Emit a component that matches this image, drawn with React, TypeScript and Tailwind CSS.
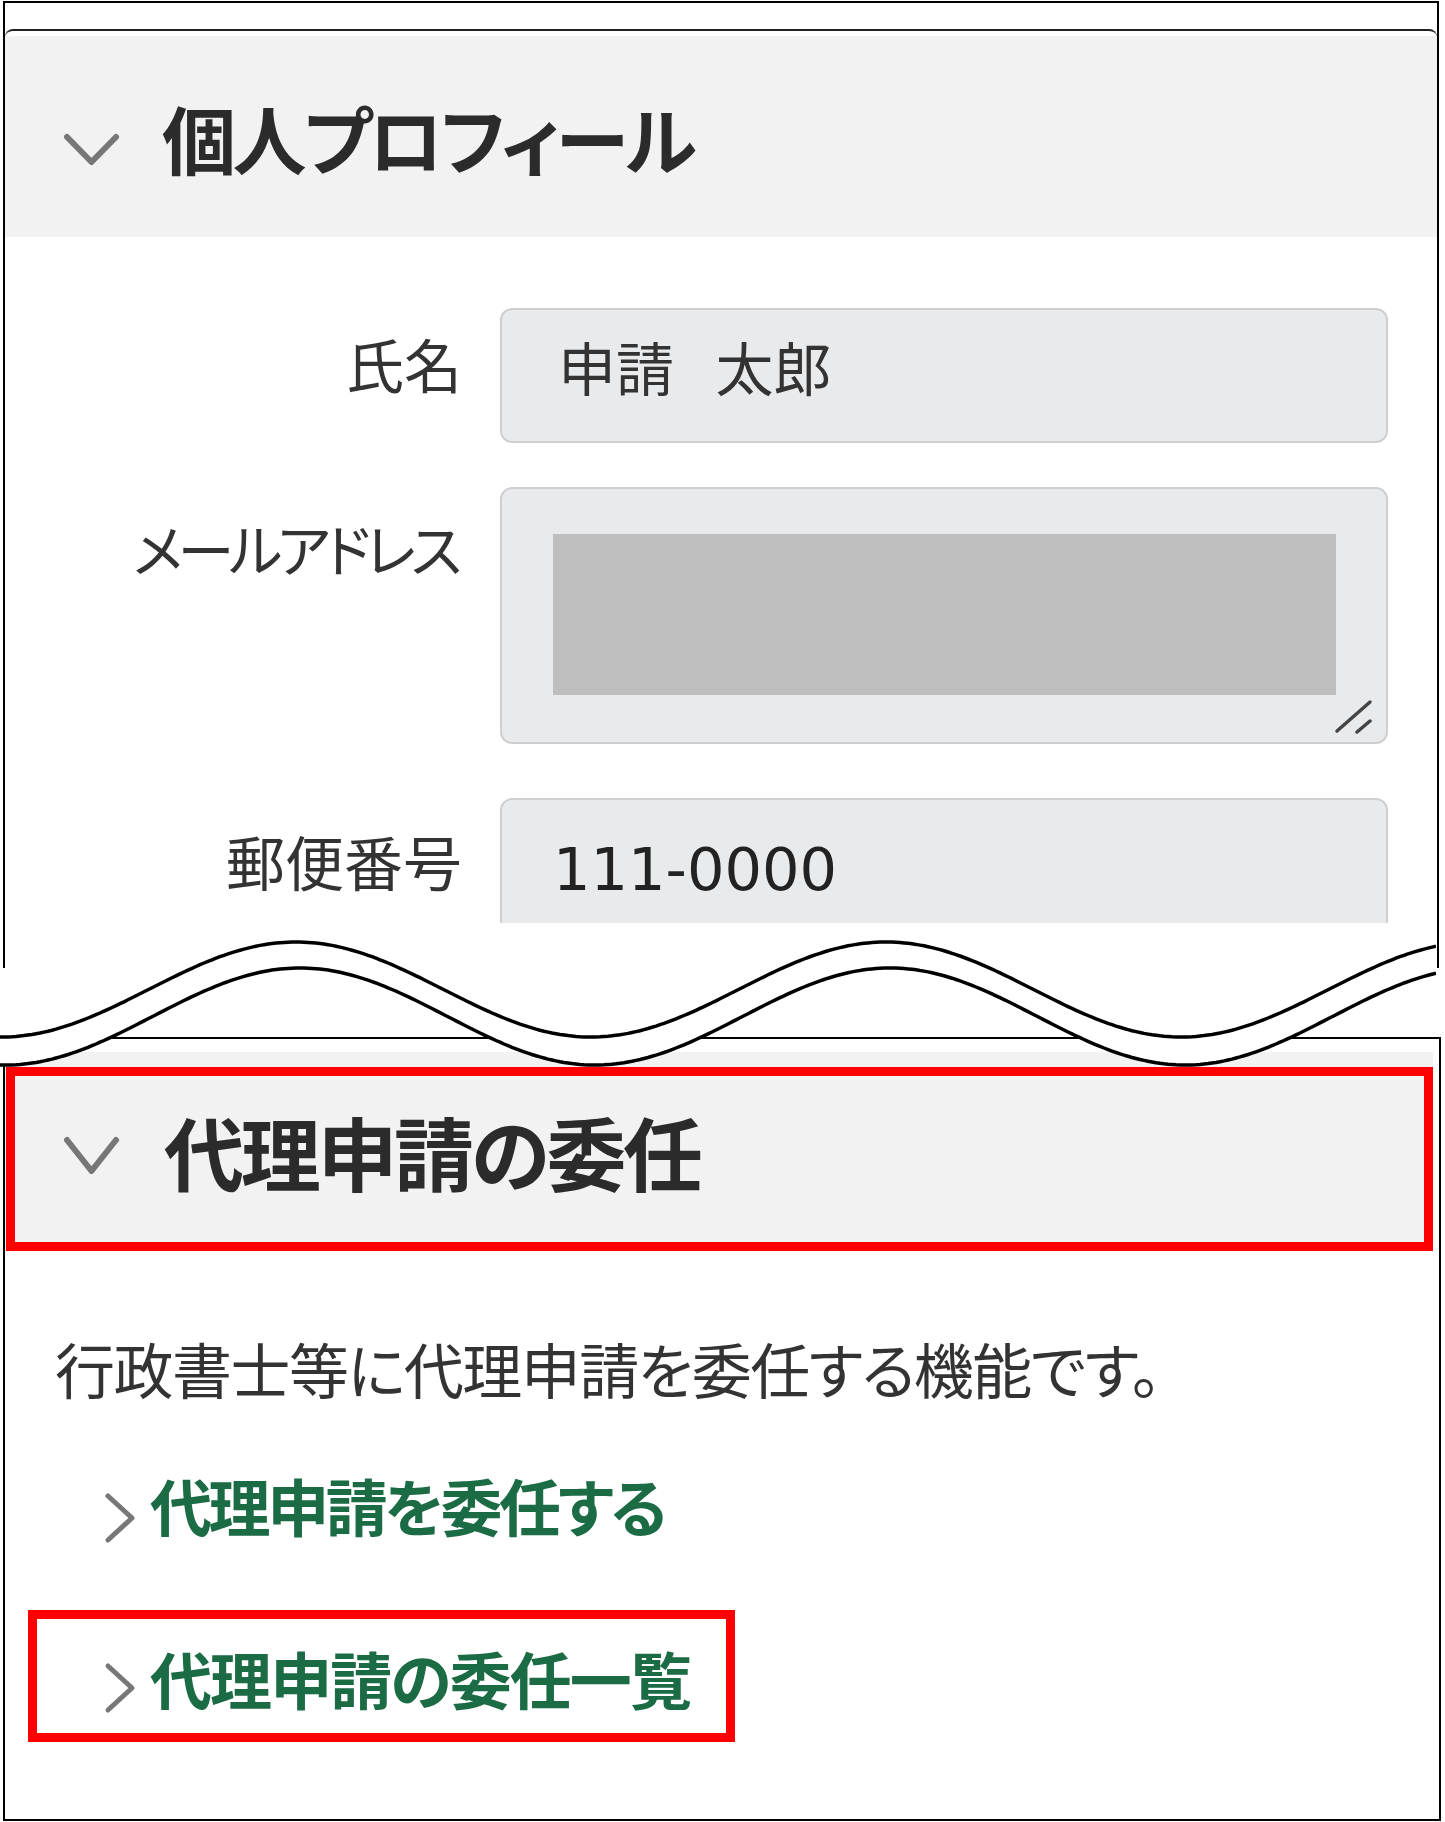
import React from 'react';

const period = 590;

function wavePoints(y0: number, amp: number, phase: number, w: number) {
  const pts: string[] = [];
  for (let x = 0; x <= w; x += 4) {
    const y = y0 - amp * Math.cos((2 * Math.PI * (x - phase)) / period);
    pts.push(`${x},${y.toFixed(1)}`);
  }
  return pts;
}

function WaveBreak() {
  const w = 1436;
  const upper = wavePoints(61.5, 47.5, 296, w);
  const lower = wavePoints(88.5, 48.5, 300, w);
  const fill = [...upper, ...[...lower].reverse()].join(' ');
  return (
    <svg className="absolute left-0 -top-[40px] z-10" width={w} height={150} viewBox={`0 0 ${w} 150`}>
      <polygon points={fill} fill="#fff" />
      <polyline points={upper.join(' ')} fill="none" stroke="#000" strokeWidth={3.5} />
      <polyline points={lower.join(' ')} fill="none" stroke="#000" strokeWidth={3.5} />
    </svg>
  );
}

function ChevronDown({ h = 33 }: { h?: number }) {
  return (
    <svg width={57} height={h} viewBox={`0 0 57 ${h}`} className="shrink-0">
      <polyline points={`4,4 28.5,${h - 4} 53,4`} fill="none" stroke="#777" strokeWidth={6} strokeLinecap="round" strokeLinejoin="round" />
    </svg>
  );
}

function ChevronRight() {
  return (
    <svg width={34} height={52} viewBox="0 0 34 52" className="shrink-0">
      <polyline points="5,4 29,26 5,48" fill="none" stroke="#777" strokeWidth={5} strokeLinecap="round" strokeLinejoin="round" />
    </svg>
  );
}

const jp = "font-['Noto_Sans_CJK_JP',sans-serif] [font-feature-settings:'palt']";

export default function App() {
  return (
    <div className="relative w-[1445px] h-[1822px] bg-white overflow-hidden text-[#333] font-['Noto_Sans_CJK_JP',sans-serif]">
      {/* top crop */}
      <div className="ml-[3px] mt-[1px] w-[1436px] h-[967px] border-x-2 border-t-2 border-black overflow-hidden">
        <div className="mt-[26px] border-t-2 border-[#222] rounded-t-[8px] pt-[5px]">
          <div className="h-[201px] bg-[#f2f2f2] flex items-center pl-[58px]">
            <div className="pt-[26px]">
              <ChevronDown />
            </div>
            <h2 className={`ml-[42px] text-[74px] leading-none font-bold tracking-[-3.4px] text-[#2b2b2b] ${jp}`}>個人プロフィール</h2>
          </div>

          <div className="pt-[71px] flex flex-col">
            <div className="flex items-start">
              <label className={`w-[457px] text-right text-[58px] leading-none pt-[26px] ${jp}`}>氏名</label>
              <div className="ml-[38px] w-[888px] h-[135px] rounded-[12px] border-2 border-[#cfcfcf] bg-[#e9eaec] pl-[56px] pt-[32px] text-[58px] leading-none text-[#333] [word-spacing:23px] font-['DejaVu_Sans','Noto_Sans_CJK_JP',sans-serif]">
                申請 太郎
              </div>
            </div>

            <div className="flex items-start mt-[44px]">
              <label className={`w-[457px] text-right text-[57px] leading-none tracking-[-5px] pr-[5px] pt-[32px] ${jp}`}>メールアドレス</label>
              <div className="relative ml-[38px] w-[888px] h-[257px] rounded-[12px] border-2 border-[#cfcfcf] bg-[#e9eaec] pl-[51px] pt-[45px]">
                <div className="w-[783px] h-[161px] bg-[#bebebe]" />
                <svg className="absolute right-[12px] bottom-[8px]" width={40} height={36} viewBox="0 0 40 36">
                  <line x1={3} y1={33} x2={36} y2={4} stroke="#444" strokeWidth={3.5} strokeLinecap="round" />
                  <line x1={23} y1={34} x2={36} y2={23} stroke="#444" strokeWidth={3.5} strokeLinecap="round" />
                </svg>
              </div>
            </div>

            <div className="flex items-start mt-[54px]">
              <label className={`w-[457px] text-right text-[59px] leading-none pt-[33px] ${jp}`}>郵便番号</label>
              <div className="ml-[38px] w-[888px] h-[125px] overflow-hidden">
                <div className="h-[135px] rounded-[12px] border-2 border-[#cfcfcf] bg-[#e9eaec] pl-[51px] pt-[40px] text-[59px] leading-none text-[#222] font-['DejaVu_Sans',sans-serif]">
                  111-0000
                </div>
              </div>
            </div>
          </div>
        </div>
      </div>

      {/* break */}
      <div className="relative h-[69px]">
        <WaveBreak />
      </div>

      {/* bottom crop */}
      <div className="ml-[3px] w-[1438px] h-[784px] border-2 border-black pt-[13px]">
        <div className="relative mr-[6px] h-[196px] bg-[#f2f2f2] flex items-center pl-[58px]">
          <div className="pt-[10px]">
            <ChevronDown h={39} />
          </div>
          <h2 className={`ml-[44px] text-[80px] leading-none font-bold tracking-[-3.3px] text-[#2b2b2b] ${jp}`}>代理申請の委任</h2>
          <div className="absolute left-[1px] right-0 top-[15px] -bottom-[3px] border-[9px] border-[#ff0000]" />
        </div>

        <p className={`mt-[90px] pl-[50px] text-[60px] leading-none tracking-[-1.5px] text-[#333] ${jp}`}>
          行政書士等に代理申請を委任する機能です。
        </p>

        <div className="mt-[76px] pl-[98px] flex items-start">
          <div className="mt-[18px]">
            <ChevronRight />
          </div>
          <a className={`ml-[13px] text-[62px] leading-none font-bold tracking-[-3.4px] text-[#1b6b45] ${jp}`}>代理申請を委任する</a>
        </div>

        <div className="mt-[66px] ml-[23px] w-[707px] h-[132px] border-[9px] border-[#ff0000] pt-[28px] pl-[66px] flex items-start">
          <div className="mt-[15px]">
            <ChevronRight />
          </div>
          <a className={`ml-[13px] text-[62px] leading-none font-bold tracking-[-1.9px] text-[#1b6b45] whitespace-nowrap ${jp}`}>代理申請の委任一覧</a>
        </div>
      </div>
    </div>
  );
}
